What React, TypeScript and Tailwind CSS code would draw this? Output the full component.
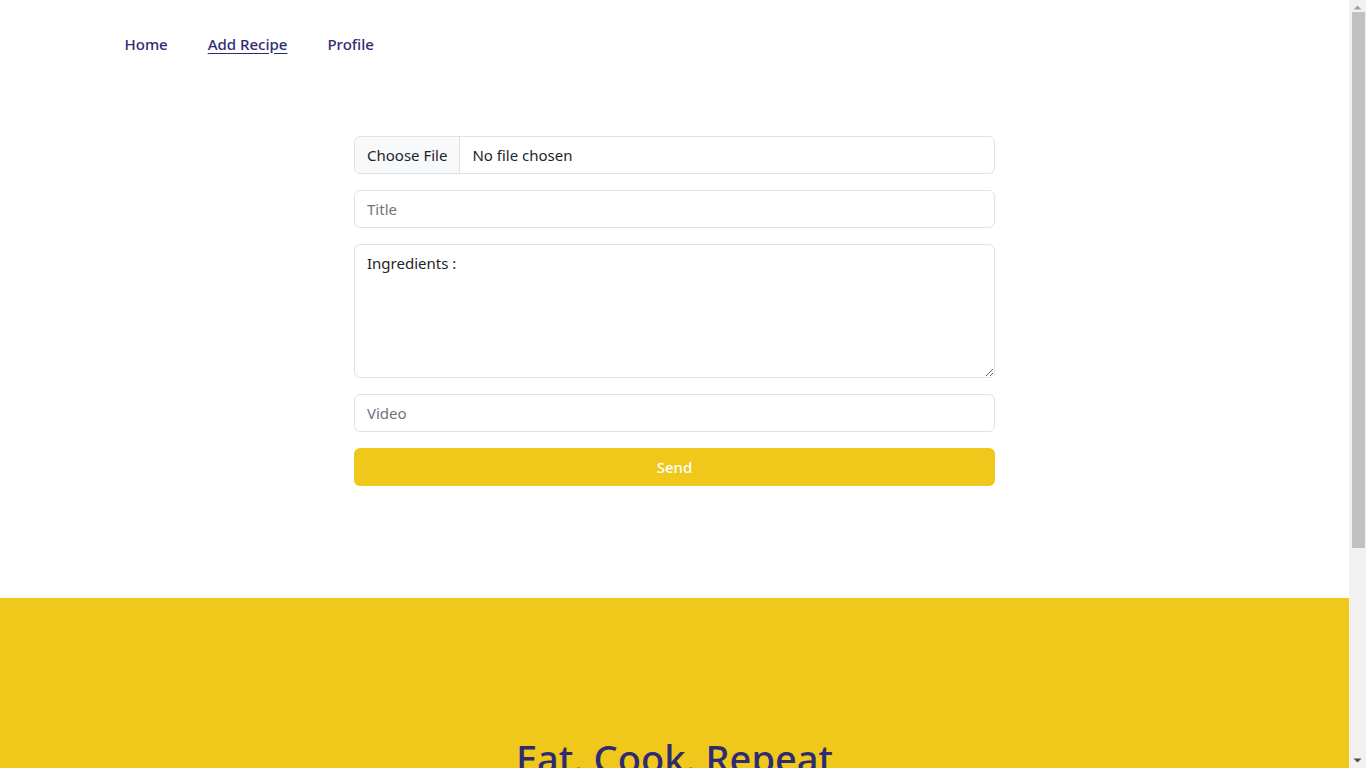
import React from "react";

const App: React.FC = () => {
  return (
    <div className="h-screen flex overflow-hidden bg-white font-['Noto_Sans',sans-serif]">
      <div className="flex-1 overflow-hidden">
        {/* Nav */}
        <nav className="w-[1140px] mx-auto px-3 pt-[31px] pb-[79px]">
          <ul className="flex items-center text-[15px] font-medium text-[#2f2b73]">
            <li className="px-2">
              <a href="#" className="block leading-[26px]">Home</a>
            </li>
            <li className="pl-[32px] pr-2">
              <a href="#" className="block underline underline-offset-[3px] leading-[26px]">Add Recipe</a>
            </li>
            <li className="pl-[32px] pr-2">
              <a href="#" className="block leading-[26px]">Profile</a>
            </li>
          </ul>
        </nav>

        {/* Form */}
        <form className="w-[641px] mx-auto flex flex-col gap-4 text-[15px] text-[#212529]">
          <label className="flex h-[38px] border border-[#dee2e6] rounded-[6px] overflow-hidden cursor-pointer">
            <span className="flex items-center px-3 bg-[#f8f9fa] border-r border-[#dee2e6]">Choose File</span>
            <span className="flex items-center px-3">No file chosen</span>
          </label>
          <input
            type="text"
            placeholder="Title"
            className="h-[38px] px-3 border border-[#dee2e6] rounded-[6px] outline-none placeholder:text-[#6c757d]"
          />
          <textarea
            defaultValue="Ingredients :"
            className="h-[134px] px-3 py-[6px] border border-[#dee2e6] rounded-[6px] outline-none resize-y leading-[24px]"
          />
          <input
            type="text"
            placeholder="Video"
            className="h-[38px] px-3 border border-[#dee2e6] rounded-[6px] outline-none placeholder:text-[#6c757d]"
          />
          <button
            type="button"
            className="h-[38px] rounded-[6px] bg-[#f0c71b] text-white font-medium"
          >
            Send
          </button>
        </form>

        {/* Banner */}
        <section className="mt-[112px] bg-[#f0c71b] h-[460px] pt-[137px]">
          <h2 className="text-center text-[38px] font-medium text-[#2f2b73] leading-[46px]">
            Eat. Cook. Repeat
          </h2>
        </section>
      </div>

      {/* Scrollbar */}
      <div className="w-[17px] h-full bg-[#f1f1f1] flex flex-col items-center">
        <svg width="17" height="17" viewBox="0 0 17 17" className="shrink-0">
          <path d="M4.5 9.5 L8.5 5.5 L12.5 9.5 Z" fill="#a3a3a3" />
        </svg>
        <div className="w-[13px] h-[536px] -mt-[5px] ml-[1px] bg-[#c1c1c1]" />
        <div className="flex-1" />
        <svg width="17" height="17" viewBox="0 0 17 17" className="shrink-0">
          <path d="M4.5 7.5 L8.5 11.5 L12.5 7.5 Z" fill="#505050" />
        </svg>
      </div>
    </div>
  );
};

export default App;
